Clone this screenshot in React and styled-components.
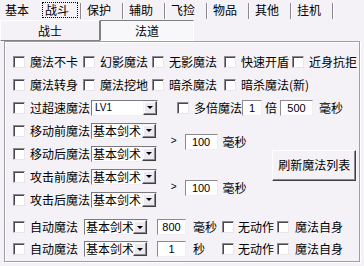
import React from 'react';
import styled, { createGlobalStyle } from 'styled-components';

const GlobalStyle = createGlobalStyle`
  html, body {
    margin: 0;
    padding: 0;
    background: #f4f2f7;
  }
  body {
    font-family: "Noto Sans CJK SC", "Noto Sans", sans-serif;
    font-size: 12px;
    line-height: 14px;
    color: #000;
  }
`;

const Window = styled.div`
  width: 364px;
  height: 266px;
  background: #f4f2f7;
  overflow: hidden;
  display: flex;
  flex-direction: column;
`;

const TabStrip = styled.div`
  display: flex;
  height: 20px;
`;

const Tab = styled.div`
  display: flex;
  align-items: center;
  padding: 0 11px 0 5px;
  white-space: nowrap;
  outline: ${(p) => (p.$active ? '1px dotted #000' : 'none')};
  outline-offset: -3px;
`;

const TabSep = styled.span`
  width: 1px;
  margin: 3px 1px 1px 0;
  background: #8a888e;
  box-shadow: 1px 0 0 #fff;
`;

const SubTabs = styled.div`
  display: flex;
  height: 21px;
`;

const SubTab = styled.div`
  box-sizing: border-box;
  width: ${(p) => p.$w}px;
  display: flex;
  align-items: center;
  justify-content: center;
  border: 1px solid;
  border-color: ${(p) =>
    p.$active ? '#808080 #ffffff #ffffff #808080' : '#ffffff #808080 #808080 #ffffff'};
  background: ${(p) => (p.$active ? '#f8f7fa' : 'transparent')};
`;

const Group = styled.div`
  box-sizing: border-box;
  margin: 0 4px 0 4px;
  width: 356px;
  height: 221px;
  border: 1px solid #a09ea4;
  box-shadow: inset 1px 1px 0 #fff, 1px 1px 0 #fff;
  padding: 8px 0 0 8px;
`;

const CheckGrid = styled.div`
  display: grid;
  grid-template-columns: 70px 69px 72px 68px auto;
  grid-auto-rows: 23px;
  align-items: center;
`;

const Row = styled.div`
  display: flex;
  align-items: center;
  height: 23px;
`;

const CheckItem = styled.label`
  display: flex;
  align-items: center;
  gap: ${(p) => p.$gap ?? 5}px;
  margin-left: ${(p) => p.$ml || 0}px;
  white-space: nowrap;
`;

const Box = styled.span`
  box-sizing: border-box;
  width: 12px;
  height: 12px;
  background: #fff;
  border: 1px solid;
  border-color: #8c8a90 #e8e6ec #e8e6ec #8c8a90;
  box-shadow: inset 1px 1px 0 #4a484e;
  flex: none;
`;

const Select = styled.div`
  box-sizing: border-box;
  display: flex;
  width: ${(p) => p.$w}px;
  height: 16px;
  margin-left: ${(p) => p.$ml || 0}px;
  background: #fff;
  border: 1px solid;
  border-color: #7c7a80 #f0eef2 #f0eef2 #7c7a80;
  flex: none;
`;

const SelectText = styled.span`
  flex: 1;
  overflow: hidden;
  white-space: nowrap;
  padding-left: ${(p) => (p.$small ? 3 : 1)}px;
  font-family: ${(p) =>
    p.$small ? '"Liberation Sans", sans-serif' : '"Noto Sans CJK SC", sans-serif'};
  font-size: ${(p) => (p.$small ? 10 : 12)}px;
  line-height: 14px;
`;

const DropButton = styled.span`
  box-sizing: border-box;
  width: 14px;
  height: 14px;
  flex: none;
  display: flex;
  align-items: center;
  justify-content: center;
  background: #ece9f0;
  border: 1px solid;
  border-color: #f4f2f7 #404040 #404040 #f4f2f7;
  box-shadow: inset -1px -1px 0 #8c8a90, inset 1px 1px 0 #fff;

  &::after {
    content: '';
    border-left: 3px solid transparent;
    border-right: 3px solid transparent;
    border-top: 3px solid #000;
  }
`;

const SpinBox = styled.div`
  box-sizing: border-box;
  width: ${(p) => p.$w}px;
  height: 16px;
  margin-left: ${(p) => p.$ml || 0}px;
  background: #fff;
  border: 1px solid;
  border-color: #8c8a90 #f0eef2 #f0eef2 #8c8a90;
  font-family: "Liberation Sans", sans-serif;
  font-size: 11px;
  line-height: 14px;
  text-align: center;
  flex: none;
`;

const Unit = styled.span`
  margin-left: ${(p) => p.$ml || 0}px;
  white-space: nowrap;
`;

const MagicBlock = styled.div`
  display: grid;
  grid-template-columns: auto auto auto;
  grid-template-rows: repeat(4, 23px);
  align-items: center;
`;

const ArrowGroup = styled.div`
  grid-column: 2;
  grid-row: span 2;
  display: flex;
  align-items: center;
  margin-left: 11px;
`;

const Arrow = styled.span`
  font-family: "Liberation Sans", sans-serif;
  font-size: 10px;
  margin-top: -2px;
`;

const Button = styled.div`
  grid-column: 3;
  grid-row: 1 / span 4;
  box-sizing: border-box;
  width: 84px;
  height: 31px;
  margin-left: 23px;
  display: flex;
  align-items: center;
  justify-content: center;
  border: 1px solid;
  border-color: #fff #404040 #404040 #fff;
  box-shadow: inset -1px -1px 0 #8c8a90;
  white-space: nowrap;
`;

const AutoGrid = styled.div`
  display: grid;
  grid-template-columns: 71px 73px 36px 29px 55px auto;
  grid-auto-rows: 22px;
  align-items: center;
  margin-top: 5px;
`;

const tabs = ['基本', '战斗', '保护', '辅助', '飞捡', '物品', '其他', '挂机'];
const checkRows = [
  ['魔法不卡', '幻影魔法', '无影魔法', '快速开盾', '近身抗拒'],
  ['魔法转身', '魔法挖地', '暗杀魔法', '暗杀魔法(新)'],
];
const magicRows = ['移动前魔法', '移动后魔法', '攻击前魔法', '攻击后魔法'];
const autoRows = [
  { value: '800', unit: '毫秒' },
  { value: '1', unit: '秒' },
];

const Check = ({ label, ml, gap }) => (
  <CheckItem $ml={ml} $gap={gap}>
    <Box />
    {label}
  </CheckItem>
);

const Combo = ({ text, w, ml, small }) => (
  <Select $w={w} $ml={ml}>
    <SelectText $small={small}>{text}</SelectText>
    <DropButton />
  </Select>
);

const App = () => {
  return (
    <Window>
      <GlobalStyle />
      <TabStrip>
        {tabs.map((t, i) => (
          <React.Fragment key={t}>
            <Tab $active={i === 1}>{t}</Tab>
            {i > 0 && <TabSep />}
          </React.Fragment>
        ))}
      </TabStrip>
      <SubTabs>
        <SubTab $w={100}>战士</SubTab>
        <SubTab $w={94} $active>
          法道
        </SubTab>
      </SubTabs>
      <Group>
        <CheckGrid>
          {checkRows.flat().map((c) => (
            <Check key={c} label={c} />
          ))}
        </CheckGrid>
        <Row>
          <Check label="过超速魔法" />
          <Combo text="LV1" w={67} ml={1} small />
          <Check label="多倍魔法" ml={19} />
          <SpinBox $w={20}>1</SpinBox>
          <Unit $ml={3}>倍</Unit>
          <SpinBox $w={33} $ml={3}>
            500
          </SpinBox>
          <Unit $ml={6}>毫秒</Unit>
        </Row>
        <MagicBlock>
          {magicRows.map((m, i) => (
            <React.Fragment key={m}>
              <Row style={{ gridColumn: 1, gridRow: i + 1 }}>
                <Check label={m} />
                <Combo text="基本剑术" w={66} ml={1} />
              </Row>
              {i % 2 === 0 && (
                <ArrowGroup style={{ gridRow: `${i + 1} / span 2` }}>
                  <Arrow>&gt;</Arrow>
                  <SpinBox $w={33} $ml={8}>
                    100
                  </SpinBox>
                  <Unit $ml={5}>毫秒</Unit>
                </ArrowGroup>
              )}
            </React.Fragment>
          ))}
          <Button>刷新魔法列表</Button>
        </MagicBlock>
        <AutoGrid>
          {autoRows.map((r) => (
            <React.Fragment key={r.unit}>
              <Check label="自动魔法" />
              <Combo text="基本剑术" w={64} />
              <SpinBox $w={29}>{r.value}</SpinBox>
              <Unit>{r.unit}</Unit>
              <Check label="无动作" gap={4} />
              <Check label="魔法自身" gap={6} />
            </React.Fragment>
          ))}
        </AutoGrid>
      </Group>
    </Window>
  );
};

export default App;
